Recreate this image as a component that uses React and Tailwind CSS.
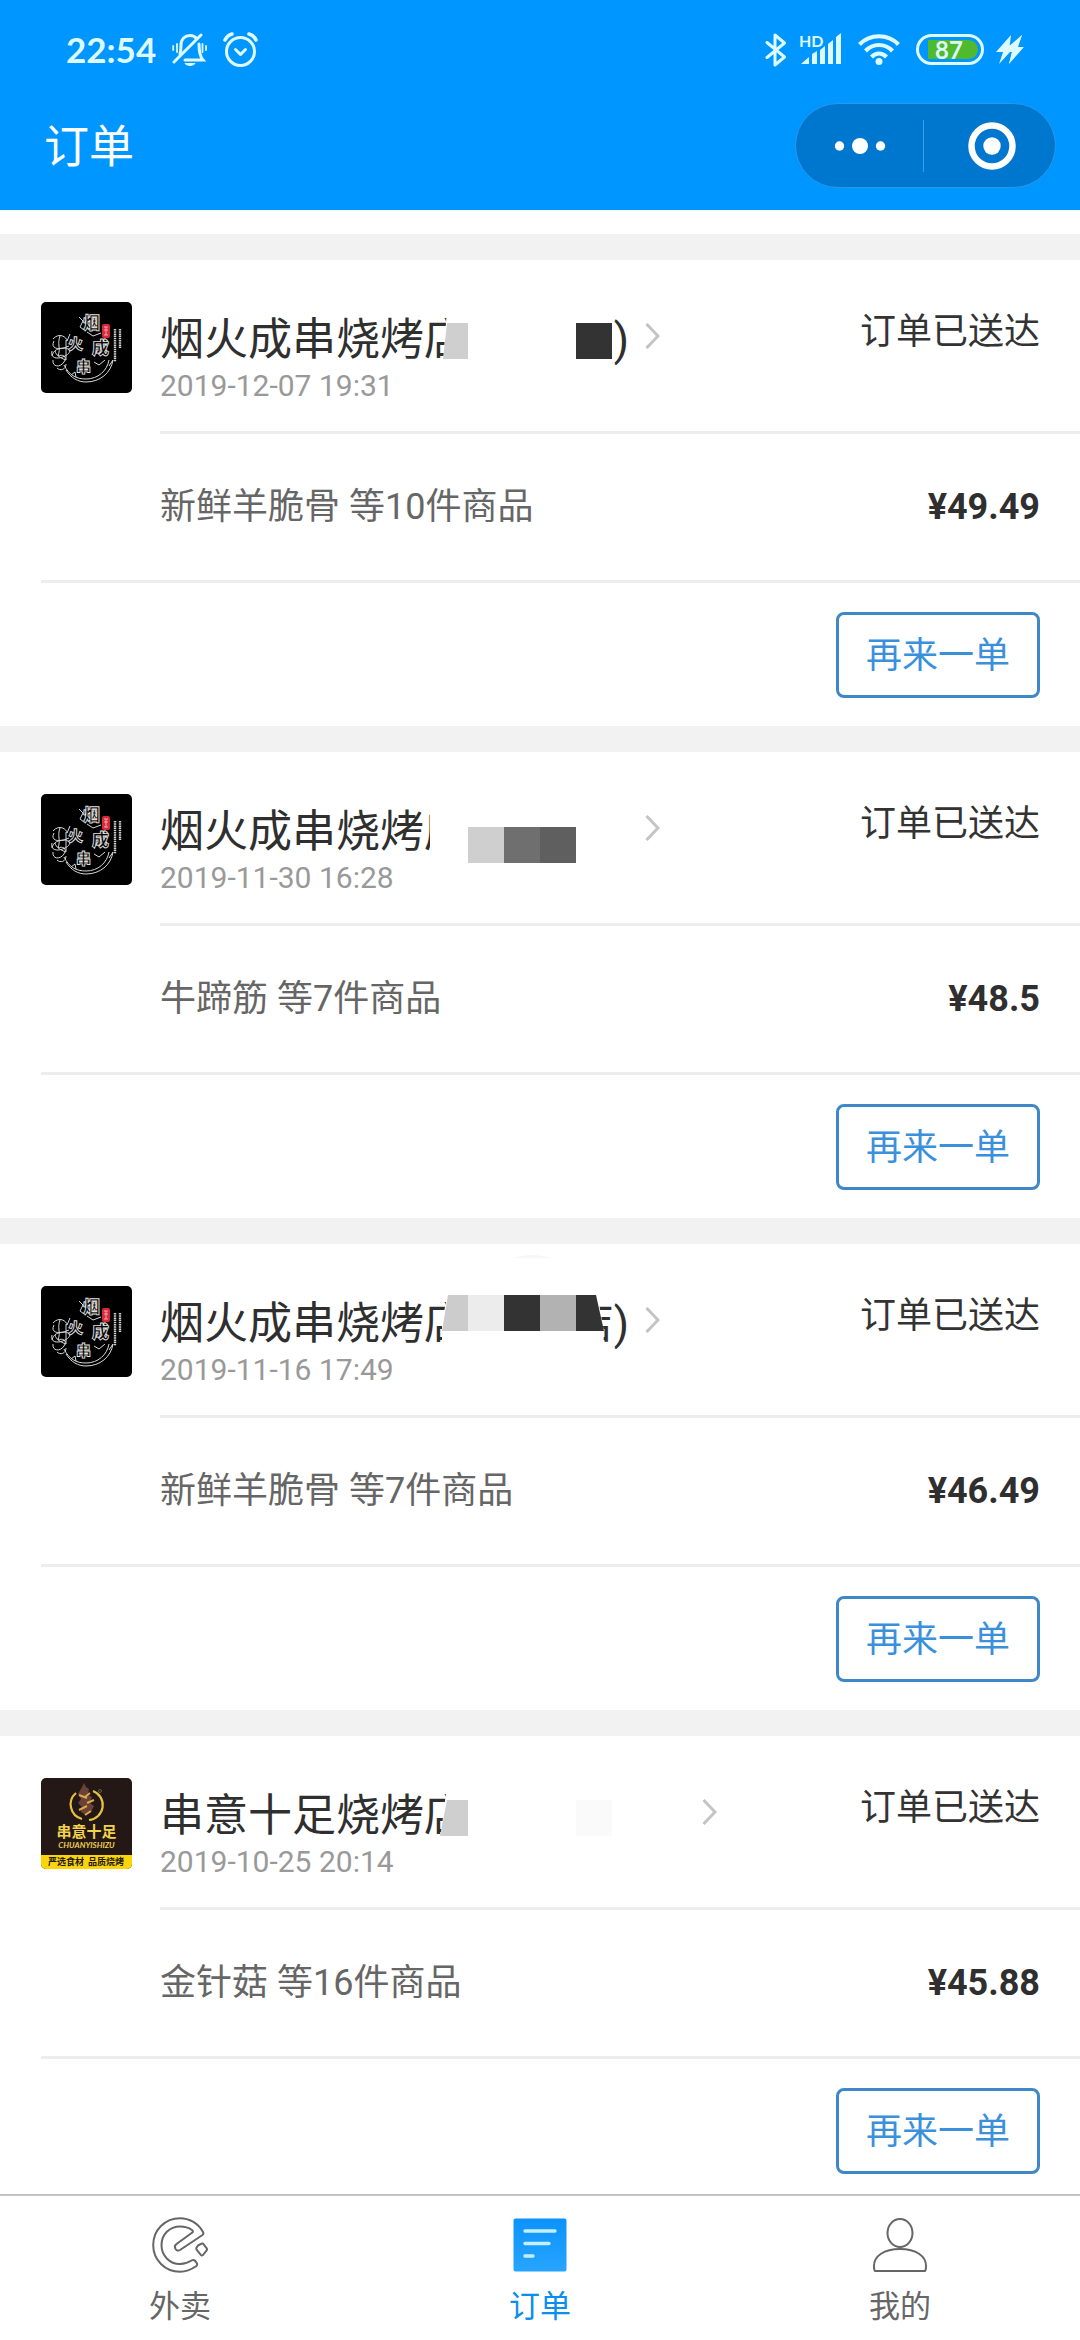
const FONT = "font-[Roboto,'Noto_Sans_CJK_SC',sans-serif]";

function BellOff() {
  return (
    <svg viewBox="0 0 35 34" className="h-[34px] w-[35px]" fill="none" stroke="currentColor" strokeWidth="3" strokeLinecap="round">
      <path d="M8 21C9 18 9 16 9 12c0-6 4-9.500 9-9.500 3 0 5 1 6.500 3" />
      <path d="M27 11c0 7 .5 12 4 16H13" />
      <path d="M29 2 2 29" />
      <path d="M5 11v8M1.200 13v4M30.500 11v8M34 13v4" strokeWidth="1.800" />
      <path d="M12.500 30h11c-1.500 4-9.500 4-11 0z" fill="currentColor" stroke="none" />
    </svg>
  );
}

function Alarm() {
  return (
    <svg viewBox="0 0 35 35" className="h-[35px] w-[35px]" fill="none" stroke="currentColor" strokeWidth="3" strokeLinecap="round" strokeLinejoin="round">
      <circle cx="17.500" cy="19.500" r="14" />
      <path d="m12.500 17.500 5 5 5-5" />
      <path d="M2 8c1.500-3 4-5.200 7-6M33 8c-1.500-3-4-5.200-7-6" strokeWidth="3.600" />
    </svg>
  );
}

function Bluetooth() {
  return (
    <svg viewBox="0 0 22 34" className="h-[34px] w-[22px]" fill="none" stroke="currentColor" strokeWidth="3" strokeLinejoin="round" strokeLinecap="round">
      <path d="M2 9.500 19.500 24 10 32V2l9.500 8L2 24.500" />
    </svg>
  );
}

function Signal() {
  return (
    <div className="relative h-[34px] w-[43px]">
      <span className="absolute top-0 left-0 font-[Lato] text-[16px] leading-[15px] font-bold">HD</span>
      <svg viewBox="0 0 43 34" className="h-[34px] w-[43px]" fill="currentColor">
        <path d="M2 31l8-7v7zM13 21l5-3v13h-5zM21 17l5-4v18h-5zM29 11l5-4v24h-5zM37 4l5-4v31h-5z" />
      </svg>
    </div>
  );
}

function Wifi() {
  return (
    <svg viewBox="0 0 42 31" className="h-[31px] w-[42px]" fill="none" stroke="currentColor" strokeWidth="4.200">
      <path d="M1.500 10.500C12-.5 30-.5 40.500 10.500" />
      <path d="M7.500 17C15 9 27 9 34.500 17" />
      <path d="M13.500 23c4.500-4.500 10.500-4.500 15 0" />
      <circle cx="21" cy="27.500" r="3.500" fill="currentColor" stroke="none" />
    </svg>
  );
}

function Battery() {
  return (
    <div className="flex h-[31px] w-[68px] items-center justify-center rounded-full border-3 border-current px-[3px]">
      <span className="ml-[6px] flex h-[19px] w-[50px] items-center justify-center rounded-r-full bg-[#4fba2d] pr-[8px] font-[Lato] text-[24px] leading-none font-bold">87</span>
    </div>
  );
}

function Bolt() {
  return (
    <svg viewBox="0 0 28 30" className="h-[30px] w-[28px]" fill="currentColor">
      <path d="M15 0 0 17h7L3 29l11-12 1-1-2 0zM26 0 12 12l1 5h3l-3 12 15-17h-7z" />
      <path d="M15 0 9 12h5l12-12-4 12-9 17 3-12H7z" />
    </svg>
  );
}

function YanhuoLogo() {
  return (
    <svg viewBox="0 0 91 91" className="h-[91px] w-[91px] shrink-0 rounded-[5px]" role="img" aria-label="烟火成串">
      <rect width="91" height="91" fill="#000" />
      <g fill="none" stroke="#d8d8d8" strokeWidth="1">
        <path d="M25 68c5 8 12 12 20 12 14 0 25-9 27-22" />
        <path d="M23 63c5 10 12 14 22 14 12 0 21-8 23-19" />
        <path d="M12 37c6-7 14-2 14 2l3-7M13 39c-4 7 4 9 10 7l5-2M11 49c-2 7 5 9 13 5s4-8-1-8-11 2-12 8M12 58c-1 7 7 8 11 2s-2-8-6-6M19 34c-3 8 1 12-2 20M25 38v20c-6-2-10-5-11-9M16 66c3 3 9 2 9-4" />
        <path d="M30 73l4-3 1 5M68 64l4-6" />
        <path d="M38 15l4 4-3 6 4 3M46 30l6 4 8-3M53 60l5 3 6-5" />
      </g>
      <g className="font-['Noto_Sans_CJK_SC',sans-serif] font-black" fill="#000" stroke="#e2e2e2" strokeWidth="0.900">
        <text x="42" y="27" fontSize="17">烟</text>
        <text x="27" y="47" fontSize="15">火</text>
        <text x="51" y="52" fontSize="17">成</text>
        <text x="35" y="70" fontSize="15">串</text>
      </g>
      <rect x="61" y="22" width="8" height="14" rx="2" fill="#d8283a" />
      <path d="M63 25h4M63 28h4M65 25v8M63 33h4" stroke="#f5b3b8" strokeWidth="0.900" />
      <path d="M74 27v33M79 27v19" stroke="#cfcfcf" strokeWidth="2.400" strokeDasharray="1.500 0.700" />
    </svg>
  );
}

function ChuanyiLogo() {
  return (
    <svg viewBox="0 0 91 91" className="h-[91px] w-[91px] shrink-0 rounded-[5px]" role="img" aria-label="串意十足">
      <rect width="91" height="91" fill="#231815" />
      <rect y="77" width="91" height="14" fill="#fbd50c" />
      <path d="M35 15a15 15 0 0 0 6 26M52 13a15 15 0 0 1-4 29" fill="none" stroke="#e6c23c" strokeWidth="2.200" />
      <path d="M41 9l2-4 2 4 3 2-1 6 4 2-2 6 4 3-3 6-5 3-5-3 1-5-4-4 3-4-3-5z" fill="#6b4138" />
      <path d="M38 17l8 3M46 25l7-3M38 32l8-4M44 37l6-4M44 19l5-4" stroke="#d9a94a" strokeWidth="2" />
      <circle cx="59" cy="13" r="1.500" fill="none" stroke="#8a7a50" strokeWidth="0.700" />
      <g className="font-['Noto_Sans_CJK_SC',sans-serif] font-bold" textAnchor="middle">
        <text x="45.500" y="59" fontSize="15" fill="#f2d14b">串意十足</text>
        <text x="45" y="87" fontSize="9" fill="#231815" xmlSpace="preserve">严选食材  品质烧烤</text>
      </g>
      <text x="45.500" y="70" fontSize="8" textAnchor="middle" fill="#f2d14b" className="font-[Lato] font-bold italic">CHUANYISHIZU</text>
    </svg>
  );
}

/* Pixelated masks laid over the private part of a shop name; origin is the name's top-left corner. */
const MASKS = {
  a: (
    <>
      <path d="M287 0h165v58H283z" fill="#fff" />
      <path d="M287 15h21v36h-25z" fill="#cfcfcf" />
      <path d="M416 15h36v36h-36z" fill="#333" />
    </>
  ),
  b: (
    <>
      <path d="M270 0h198v62H270z" fill="#fff" />
      <path d="M308 27h36v36h-36z" fill="#cfcfcf" />
      <path d="M344 27h36v36h-36z" fill="#6f6f6f" />
      <path d="M380 27h36v36h-36z" fill="#5f5f5f" />
    </>
  ),
  c: (
    <>
      <path d="M288 0h149l7 40-1 22H282V30z" fill="#fff" />
      <path d="M288 3h20v36h-26z" fill="#ccc" />
      <path d="M308 3h36v36h-36z" fill="#ececec" />
      <path d="M344 3h36v36h-36z" fill="#333" />
      <path d="M380 3h36v36h-36z" fill="#b2b2b2" />
      <path d="M416 3h20l8 36h-28z" fill="#333" />
      <path d="M354-34c10-4 28-4 38 0z" fill="#f7f7f7" />
    </>
  ),
  d: (
    <>
      <path d="M287 0h230v58H280z" fill="#fff" />
      <path d="M287 16h21v36h-28z" fill="#cfcfcf" />
      <path d="M416 16h36v36h-36z" fill="#fafafa" />
    </>
  ),
};

const ORDERS = [
  { shop: "烟火成串烧烤店", tail: ")", mask: "a", date: "2019-12-07 19:31", items: "新鲜羊脆骨 等10件商品", price: "¥49.49", Logo: YanhuoLogo },
  { shop: "烟火成串烧烤店", tail: "", mask: "b", date: "2019-11-30 16:28", items: "牛蹄筋 等7件商品", price: "¥48.5", Logo: YanhuoLogo },
  { shop: "烟火成串烧烤店", tail: "店)", mask: "c", date: "2019-11-16 17:49", items: "新鲜羊脆骨 等7件商品", price: "¥46.49", Logo: YanhuoLogo },
  { shop: "串意十足烧烤店", tail: "", mask: "d", wide: true, date: "2019-10-25 20:14", items: "金针菇 等16件商品", price: "¥45.88", Logo: ChuanyiLogo },
];

function OrderCard({ order }) {
  const { Logo } = order;
  return (
    <article className="shrink-0 bg-white pl-[41px]">
      <div className="flex gap-7 pt-[42px]">
        <Logo />
        <div className="flex min-w-0 flex-1 justify-between border-b-3 border-[#ededed] pr-10 pb-[27px]">
          <div>
            <div className="flex gap-4 pt-[6px]">
              <h2 className={`relative flex h-[60px] items-center justify-between text-[44px] leading-[60px] text-[#2f2f2f] ${order.wide ? "w-[526px]" : "w-[469px]"}`}>
                <span className="pt-1">{order.shop}</span>
                <span className="pt-1">{order.tail}</span>
                <svg viewBox="0 0 468 58" className="absolute top-0 left-0 h-[58px] w-[468px] overflow-visible" aria-hidden="true">
                  {MASKS[order.mask]}
                </svg>
              </h2>
              <svg viewBox="0 0 15 26" className="mt-[15px] h-[26px] w-[15px]" fill="none" stroke="#c4c4c4" strokeWidth="3">
                <path d="m1.500 1 11.500 12-11.500 12" />
              </svg>
            </div>
            <time className="block text-[30px] leading-9 text-[#999]">{order.date}</time>
          </div>
          <span className="shrink-0 text-[36px] leading-[60px] text-[#333]">订单已送达</span>
        </div>
      </div>
      <div className="flex h-[149px] items-center justify-between border-b-3 border-[#ededed] pr-10 pl-[119px] text-[36px]">
        <span className="text-[#666]">{order.items}</span>
        <strong className="font-bold text-[#2f2f2f]">{order.price}</strong>
      </div>
      <div className="flex justify-end pt-[29px] pr-10 pb-[28px]">
        <button type="button" className="rounded-[8px] border-3 border-[#3f88c8] px-[27px] pt-[13px] pb-[11px] text-[36px] leading-[56px] text-[#3b90dc]">
          再来一单
        </button>
      </div>
    </article>
  );
}

function TakeoutIcon() {
  return (
    <svg viewBox="0 0 56 56" className="h-[56px] w-[56px]" fill="none" stroke="#666" strokeWidth="2" strokeLinejoin="round">
      <path d="M51 15C46 6 37 1.200 28 1.200 13 1.200 1.200 13 1.200 28S13 54.800 28 54.800c6 0 11-2 16-5.500 1.500-1 1.500-2.500.5-3.500-1.500-2.500-3-3.500-5-2.300C36 45.800 32 47 28 47 17.500 47 9.500 38.500 9.500 28S17.500 9.500 28 9.500c4.500 0 8.500 1 12 3.500 1.200 1 1.200 2 0 2.800L24.500 27c-3.500 2.500-.5 8.500 3.500 6L50.500 18c1-.8 1.200-1.800.5-3z" />
      <path d="M46 28.500l3.500-1.800c1-.4 1.700-.2 2.200.6l3 4c.5.900.4 1.600-.2 2.300L51 38c-.8.700-1.600.6-2.200-.1l-4-5c-.6-1-.7-1.800-.1-2.600z" />
    </svg>
  );
}

function OrdersIcon() {
  return (
    <svg viewBox="0 0 56 56" className="h-[56px] w-[56px]">
      <defs>
        <linearGradient id="sheet" x1="0" y1="0" x2="0" y2="1">
          <stop offset="0" stopColor="#0b93fb" />
          <stop offset="1" stopColor="#27a4ff" />
        </linearGradient>
      </defs>
      <rect x="1.500" y="1.500" width="53" height="53" rx="2" fill="url(#sheet)" />
      <path d="M13 14h30M13 26.500h24M13 39h8" stroke="#c4efff" strokeWidth="3.400" strokeLinecap="round" />
    </svg>
  );
}

function MineIcon() {
  return (
    <svg viewBox="0 0 56 56" className="h-[56px] w-[56px]" fill="none" stroke="#666" strokeWidth="2">
      <ellipse cx="28" cy="16" rx="12.500" ry="14" />
      <path d="M3 54c-1-1-1-3-1-5 0-10 10-17 26-17s26 7 26 17c0 2 0 4-1 5z" strokeLinejoin="round" />
    </svg>
  );
}

const TABS = [
  { label: "外卖", Icon: TakeoutIcon, active: false },
  { label: "订单", Icon: OrdersIcon, active: true },
  { label: "我的", Icon: MineIcon, active: false },
];

export default function App() {
  return (
    <div className={`flex h-screen flex-col bg-white ${FONT} font-normal`}>
      <header className="shrink-0 bg-[#0096ff] pb-[22px] text-white">
        <div className="flex h-[103px] items-center justify-between pr-14 pb-1 pl-[66px] text-[#dcfaff]">
          <div className="flex items-center gap-4">
            <span className="font-[Lato] text-[35px] leading-none font-bold">22:54</span>
            <BellOff />
            <Alarm />
          </div>
          <div className="flex items-center gap-3">
            <Bluetooth />
            <Signal />
            <span className="ml-1"><Wifi /></span>
            <span className="ml-1"><Battery /></span>
            <Bolt />
          </div>
        </div>
        <div className="flex items-center justify-between pr-6 pl-11">
          <h1 className="pt-1 text-[45px] leading-[64px]">订单</h1>
          <div className="flex h-[85px] w-[261px] items-center rounded-full border border-[#2a97ea] bg-[#0077cf]">
            <button type="button" aria-label="更多" className="flex flex-1 justify-center gap-2">
              <svg viewBox="0 0 52 18" className="h-[18px] w-[52px]" fill="currentColor">
                <circle cx="5.500" cy="9" r="4.700" />
                <circle cx="26" cy="9" r="8" />
                <circle cx="46.500" cy="9" r="4.700" />
              </svg>
            </button>
            <span className="h-[52px] w-px bg-[#3c9ee4]" />
            <button type="button" aria-label="关闭" className="flex flex-1 justify-center pl-1">
              <svg viewBox="0 0 48 48" className="h-12 w-12" fill="none">
                <circle cx="24" cy="24" r="20.500" stroke="currentColor" strokeWidth="6.500" />
                <circle cx="24" cy="24" r="8.700" fill="currentColor" />
              </svg>
            </button>
          </div>
        </div>
      </header>

      <main className="flex min-h-0 flex-1 flex-col gap-[26px] overflow-hidden bg-[#f2f2f2]">
        <div className="h-6 shrink-0 bg-white" />
        {ORDERS.map((order) => (
          <OrderCard key={order.date} order={order} />
        ))}
      </main>

      <nav className="grid shrink-0 grid-cols-3 border-t-2 border-[#c4c4c4] bg-white pt-[21px] pb-[9px]">
        {TABS.map(({ label, Icon, active }) => (
          <a key={label} href="#" className={`flex flex-col items-center gap-[10px] text-[31px] leading-[48px] ${active ? "text-[#0a8fee]" : "text-[#666]"}`}>
            <Icon />
            {label}
          </a>
        ))}
      </nav>
    </div>
  );
}
